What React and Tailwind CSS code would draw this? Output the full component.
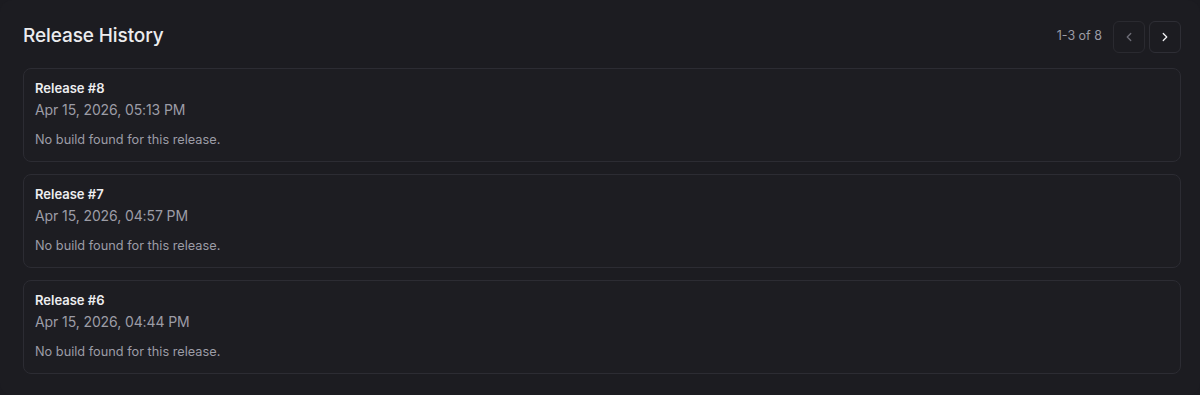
const releases = [
  { id: 8, date: 'Apr 15, 2026, 05:13 PM' },
  { id: 7, date: 'Apr 15, 2026, 04:57 PM' },
  { id: 6, date: 'Apr 15, 2026, 04:44 PM' },
];

function Chevron({ dir }) {
  return (
    <svg width="14" height="14" viewBox="0 0 24 24" fill="none" stroke="currentColor" strokeWidth="2.2" strokeLinecap="round" strokeLinejoin="round">
      {dir === 'left' ? <path d="m15 18-6-6 6-6" /> : <path d="m9 18 6-6-6-6" />}
    </svg>
  );
}

export default function App() {
  return (
    <div className="h-[395px] w-full bg-[#1b1b20] font-['Inter',sans-serif]">
      <div className="h-full rounded-xl bg-[#1c1c21] pl-[23px] pr-[19px] pt-[20px]">
        {/* Header */}
        <div className="flex items-center justify-between h-[33px] mb-[15px]">
          <h2 className="text-[19px] font-medium text-[#ececef] tracking-[-0.1px]">Release History</h2>
          <div className="flex items-center">
            <span className="text-[12.5px] text-[#9b9ba5] mr-[11px]">1-3 of 8</span>
            <button className="w-[32px] h-[32px] flex items-center justify-center rounded-md border border-[#2a2a30] text-[#6e6e78] mr-[4px]">
              <Chevron dir="left" />
            </button>
            <button className="w-[32px] h-[32px] flex items-center justify-center rounded-md border border-[#2e2e35] text-[#f2f2f4]">
              <Chevron dir="right" />
            </button>
          </div>
        </div>

        {/* Release list */}
        <div className="flex flex-col gap-[12px]">
          {releases.map((r) => (
            <div key={r.id} className="h-[94px] rounded-lg border border-[#2c2c33] bg-[#1d1d22] px-[11px] pt-[10px]">
              <div className="text-[13px] font-semibold text-[#ededf0] leading-[19px]">Release #{r.id}</div>
              <div className="text-[14px] text-[#9c9ca6] leading-[21px] mt-[1px] tracking-[-0.1px]">{r.date}</div>
              <div className="text-[12.75px] text-[#9c9ca6] leading-[19px] mt-[10px]">No build found for this release.</div>
            </div>
          ))}
        </div>
      </div>
    </div>
  );
}
